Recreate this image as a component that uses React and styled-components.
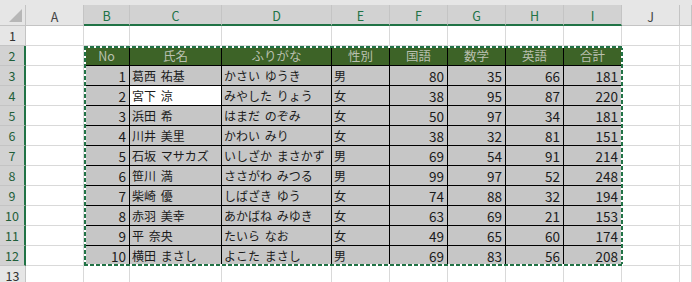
import React from 'react';
import styled, { createGlobalStyle } from 'styled-components';

const GlobalStyle = createGlobalStyle`
  html, body {
    margin: 0;
    padding: 0;
    background: #ffffff;
  }
  * {
    box-sizing: border-box;
  }
`;

const FONT = `"Noto Sans CJK JP", "Noto Sans", sans-serif`;

const colors = {
  headBg: '#e6e6e6',
  headSel: '#d2d2d2',
  headLine: '#c4c4c4',
  grid: '#d9d9d9',
  excel: '#217346',
  tableHead: '#3d6327',
  tableHeadText: '#b9c0b0',
  selCell: '#c6c6c6',
};

const sheetCols = '26px 58px 46px 92px 110px 58px 58px 58px 58px 58px 58px 1fr';
const tableCols = '46px 92px 110px 58px 58px 58px 58px 58px';

const Page = styled.div`
  width: 692px;
  height: 282px;
  overflow: hidden;
  background: #fff;
  font-family: ${FONT};
`;

const TopStrip = styled.div`
  height: 5px;
  background: ${colors.headBg};
`;

const Sheet = styled.div`
  display: grid;
  grid-template-columns: ${sheetCols};
  grid-template-rows: 21px;
  grid-auto-rows: 20px;
`;

const Corner = styled.div`
  background: ${colors.headBg};
  border-right: 1px solid ${colors.headLine};
  border-bottom: 1px solid ${colors.headLine};
  display: flex;
  align-items: flex-end;
  justify-content: flex-end;
  padding: 0 3px 3px 0;
`;

const ColHead = styled.div`
  background: ${p => (p.$selected ? colors.headSel : colors.headBg)};
  color: ${p => (p.$selected ? colors.excel : '#444')};
  border-right: 1px solid ${colors.headLine};
  border-bottom: ${p => (p.$selected ? `2px solid ${colors.excel}` : `1px solid ${colors.headLine}`)};
  font-size: 12.5px;
  display: flex;
  align-items: center;
  justify-content: center;
  padding-top: 2px;
`;

const RowHead = styled.div`
  background: ${p => (p.$selected ? colors.headSel : colors.headBg)};
  color: ${p => (p.$selected ? '#1f5f3a' : '#333')};
  border-right: ${p => (p.$selected ? `2px solid ${colors.excel}` : `1px solid ${colors.headLine}`)};
  border-bottom: 1px solid ${colors.headLine};
  font-size: 12.5px;
  display: flex;
  align-items: center;
  justify-content: center;
`;

const Cell = styled.div`
  background: #fff;
  border-right: 1px solid ${colors.grid};
  border-bottom: 1px solid ${colors.grid};
`;

const Table = styled.div`
  grid-row: 3 / 14;
  grid-column: 3 / 11;
  position: relative;
  display: grid;
  grid-template-columns: ${tableCols};
  grid-auto-rows: 20px;

  /* copy-mode marching ants */
  &::after {
    content: '';
    position: absolute;
    top: 0;
    left: 0;
    right: -1px;
    bottom: 0;
    pointer-events: none;
    background:
      repeating-linear-gradient(90deg, ${colors.excel} 0 4px, #fff 4px 6px) top / 100% 2px no-repeat,
      repeating-linear-gradient(90deg, ${colors.excel} 0 4px, #fff 4px 6px) bottom / 100% 2px no-repeat,
      repeating-linear-gradient(180deg, ${colors.excel} 0 4px, #fff 4px 6px) left / 2px 100% no-repeat,
      repeating-linear-gradient(180deg, ${colors.excel} 0 4px, #fff 4px 6px) right / 2px 100% no-repeat;
  }
`;

const HeadCell = styled.div`
  background: ${colors.tableHead};
  color: ${colors.tableHeadText};
  border-right: 1px solid #000;
  border-bottom: 1px solid #000;
  font-size: 12.5px;
  display: flex;
  align-items: center;
  justify-content: center;
`;

const DataCell = styled.div`
  background: ${p => (p.$active ? '#fff' : colors.selCell)};
  color: #1b1b1b;
  border-right: 1px solid #000;
  border-bottom: 1px solid #000;
  font-size: ${p => (p.$num ? '13.5px' : '12px')};
  word-spacing: 2px;
  display: flex;
  align-items: center;
  justify-content: ${p => (p.$num ? 'flex-end' : 'flex-start')};
  padding: ${p => (p.$num ? '0 3px 0 0' : '0 0 0 2px')};
  white-space: nowrap;
  overflow: hidden;
`;

const CornerMark = () => (
  <svg width="13" height="13" viewBox="0 0 13 13">
    <polygon points="13,0 13,13 0,13" fill="#b7b7b7" />
  </svg>
);

const headers = ['No', '氏名', 'ふりがな', '性別', '国語', '数学', '英語', '合計'];

const rows = [
  [1, '葛西 祐基', 'かさい ゆうき', '男', 80, 35, 66, 181],
  [2, '宮下 涼', 'みやした りょう', '女', 38, 95, 87, 220],
  [3, '浜田 希', 'はまだ のぞみ', '女', 50, 97, 34, 181],
  [4, '川井 美里', 'かわい みり', '女', 38, 32, 81, 151],
  [5, '石坂 マサカズ', 'いしざか まさかず', '男', 69, 54, 91, 214],
  [6, '笹川 満', 'ささがわ みつる', '男', 99, 97, 52, 248],
  [7, '柴崎 優', 'しばざき ゆう', '女', 74, 88, 32, 194],
  [8, '赤羽 美幸', 'あかばね みゆき', '女', 63, 69, 21, 153],
  [9, '平 奈央', 'たいら なお', '女', 49, 65, 60, 174],
  [10, '横田 まさし', 'よこた まさし', '男', 69, 83, 56, 208],
];

const letters = ['A', 'B', 'C', 'D', 'E', 'F', 'G', 'H', 'I', 'J'];
const inTable = l => l >= 'B' && l <= 'I';

export default function App() {
  const sheetRows = [];
  for (let r = 1; r <= 13; r++) {
    const tableRow = r >= 2 && r <= 12;
    sheetRows.push(<RowHead key={`rh${r}`} $selected={tableRow}>{r}</RowHead>);
    letters.forEach(l => {
      if (tableRow && inTable(l)) return;
      sheetRows.push(<Cell key={`${l}${r}`} />);
    });
    sheetRows.push(<Cell key={`x${r}`} />);
  }

  return (
    <Page>
      <GlobalStyle />
      <TopStrip />
      <Sheet>
        <Corner><CornerMark /></Corner>
        {letters.map(l => (
          <ColHead key={l} $selected={inTable(l)}>{l}</ColHead>
        ))}
        <ColHead />
        {sheetRows}
        <Table>
          {headers.map(h => <HeadCell key={h}>{h}</HeadCell>)}
          {rows.map((row, i) =>
            row.map((v, j) => (
              <DataCell
                key={`${i}-${j}`}
                $num={typeof v === 'number'}
                $active={i === 1 && j === 1}
              >
                {v}
              </DataCell>
            ))
          )}
        </Table>
      </Sheet>
    </Page>
  );
}
